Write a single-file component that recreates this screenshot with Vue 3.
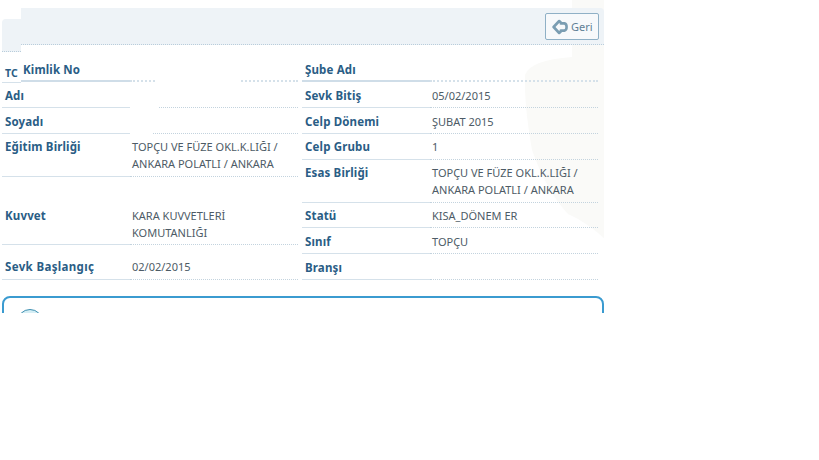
<script setup>
const left = [
  { label: '', value: '', h: 26, cls: 'tc first' },
  { label: 'Adı', value: '', h: 26, cls: 'mask-b' },
  { label: 'Soyadı', value: '', h: 26, cls: 'mask-c' },
  { label: 'Eğitim Birliği', value: 'TOPÇU VE FÜZE OKL.K.LIĞI / ANKARA POLATLI / ANKARA', h: 43, cls: 'up' },
  { label: 'Kuvvet', value: 'KARA KUVVETLERİ KOMUTANLIĞI', h: 68, cls: 'kuvvet' },
  { label: 'Sevk Başlangıç', value: '02/02/2015', h: 35, cls: 'sevk' }
]
const right = [
  { label: 'Şube Adı', value: '', h: 26, cls: 'first' },
  { label: 'Sevk Bitiş', value: '05/02/2015', h: 26 },
  { label: 'Celp Dönemi', value: 'ŞUBAT 2015', h: 26 },
  { label: 'Celp Grubu', value: '1', h: 26, cls: 'up' },
  { label: 'Esas Birliği', value: 'TOPÇU VE FÜZE OKL.K.LIĞI / ANKARA POLATLI / ANKARA', h: 43, cls: 'up' },
  { label: 'Statü', value: 'KISA_DÖNEM ER', h: 25, cls: 'up' },
  { label: 'Sınıf', value: 'TOPÇU', h: 26 },
  { label: 'Branşı', value: '', h: 26 }
]
const columns = [left, right]
</script>

<template>
  <div class="page">
    <svg class="watermark" viewBox="0 0 80 240" width="80" height="240" aria-hidden="true">
      <path d="M48 0 L80 0 L80 238 Q62 222 44 214 Q22 190 8 150 Q0 105 1 75 Q6 60 48 57 Z" fill="#fafaf8" />
    </svg>
    <header class="bar">
      <button class="back" type="button">
        <svg viewBox="0 0 16 16" width="16" height="16" aria-hidden="true">
          <path d="M7.2 2 L1.6 8 L7.2 14 L8.8 12.6 L8.8 11.6 L12.4 11.6 Q14.6 11.2 14.6 8 Q14.6 4.8 12.4 4.4 L8.8 4.4 L8.8 3.4 Z" fill="#f7f9fb" stroke="#7a9db2" stroke-width="2.6" stroke-linejoin="round" />
        </svg>
        <span>Geri</span>
      </button>
    </header>
    <div class="notch"></div>
    <section class="details">
      <div v-for="(col, c) in columns" :key="c" class="col">
        <div v-for="(row, r) in col" :key="r" class="row" :class="row.cls" :style="{ height: row.h + 'px' }">
          <div class="label">
            <template v-if="row.cls && row.cls.startsWith('tc')"><span class="tc-a">TC</span> <span class="tc-b">Kimlik No</span></template>
            <template v-else>{{ row.label }}</template>
          </div>
          <div class="value">{{ row.value }}</div>
        </div>
      </div>
    </section>
    <section class="card">
      <span class="circle"></span>
    </section>
  </div>
</template>

<style scoped>
.page {
  position: relative;
  width: 604px;
  height: 313px;
  overflow: hidden;
  padding-top: 8px;
  box-sizing: border-box;
  background: #fff;
  font-family: "Noto Sans", "DejaVu Sans", sans-serif;
  font-size: 11px;
  color: #4d5b66;
}
.watermark {
  position: absolute;
  top: 0;
  right: 0;
}
.bar {
  position: relative;
  margin-left: 21px;
  height: 37px;
  box-sizing: border-box;
  padding: 5px 5px 0 0;
  display: flex;
  justify-content: flex-end;
  align-items: flex-start;
  background: #eef3f7;
  border-bottom: 1px dotted #b9cddb;
  border-top-right-radius: 4px;
}
.notch {
  position: absolute;
  left: 2px;
  top: 19px;
  width: 19px;
  height: 33px;
  background: #eef3f7;
  border-bottom: 1px dotted #b9cddb;
  box-sizing: border-box;
  border-top-left-radius: 4px;
}
.back {
  display: flex;
  align-items: center;
  gap: 3px;
  width: 54px;
  height: 27px;
  padding: 0 0 0 6px;
  box-sizing: border-box;
  border: 1px solid #8fb0c6;
  border-radius: 2px;
  background: #f7f9fb;
  color: #5f7f95;
  font: inherit;
}
.details {
  position: relative;
  display: flex;
  gap: 4px;
  margin: 11px 0 0 2px;
  width: 596px;
}
.col {
  width: 296px;
}
.row {
  position: relative;
  display: grid;
  grid-template-columns: 128px 168px;
  box-sizing: border-box;
  line-height: 17px;
}
.label {
  position: relative;
  padding: 5px 0 0 3px;
  border-bottom: 1px solid #d5e1ea;
  font-weight: 700;
  font-size: 11.5px;
  letter-spacing: 0.15px;
  color: #2a5d85;
}
.value {
  position: relative;
  padding: 5px 0 0 2px;
  border-bottom: 1px dotted #c3d3de;
}
.up .label,
.up .value {
  padding-top: 4px;
}
.first .label {
  border-bottom-width: 2px;
  border-bottom-color: #cfdde8;
}
.first .value {
  border-bottom-width: 2px;
  border-bottom-color: #d5e1ea;
}
.tc-a {
  position: relative;
  top: 3px;
  font-size: 10.5px;
}
.tc-b {
  position: relative;
  left: 2px;
}
/* spliced underline: the first 19px sit lower than the rest */
.tc .label::before {
  content: "";
  position: absolute;
  left: 0;
  bottom: -2px;
  width: 19px;
  height: 2px;
  background: #fff;
}
.tc .label::after {
  content: "";
  position: absolute;
  left: 0;
  bottom: -3px;
  width: 19px;
  height: 1px;
  background: #d5e1ea;
}
/* redaction patches over the dotted rules */
.tc .value::after,
.mask-b .value::after,
.mask-c .value::after {
  content: "";
  position: absolute;
  bottom: -2px;
  height: 3px;
  left: 0;
  background: #fff;
}
.tc .value::after {
  left: 27px;
  width: 82px;
}
.mask-b .value::after {
  width: 28px;
}
.mask-c .value::after {
  width: 22px;
}
.kuvvet .label,
.kuvvet .value {
  padding-top: 30px;
}
.sevk .label,
.sevk .value {
  padding-top: 13px;
}
.sevk .label {
  letter-spacing: 0.35px;
}
.card {
  position: relative;
  height: 40px;
  margin: 16px 0 0 2px;
  box-sizing: border-box;
  border: 2px solid #3b9bd0;
  border-radius: 8px;
}
.circle {
  position: absolute;
  left: 13px;
  top: 11px;
  width: 26px;
  height: 26px;
  box-sizing: border-box;
  border: 1px solid #3f8fb0;
  border-radius: 50%;
  background: #d5eef5;
}
</style>
